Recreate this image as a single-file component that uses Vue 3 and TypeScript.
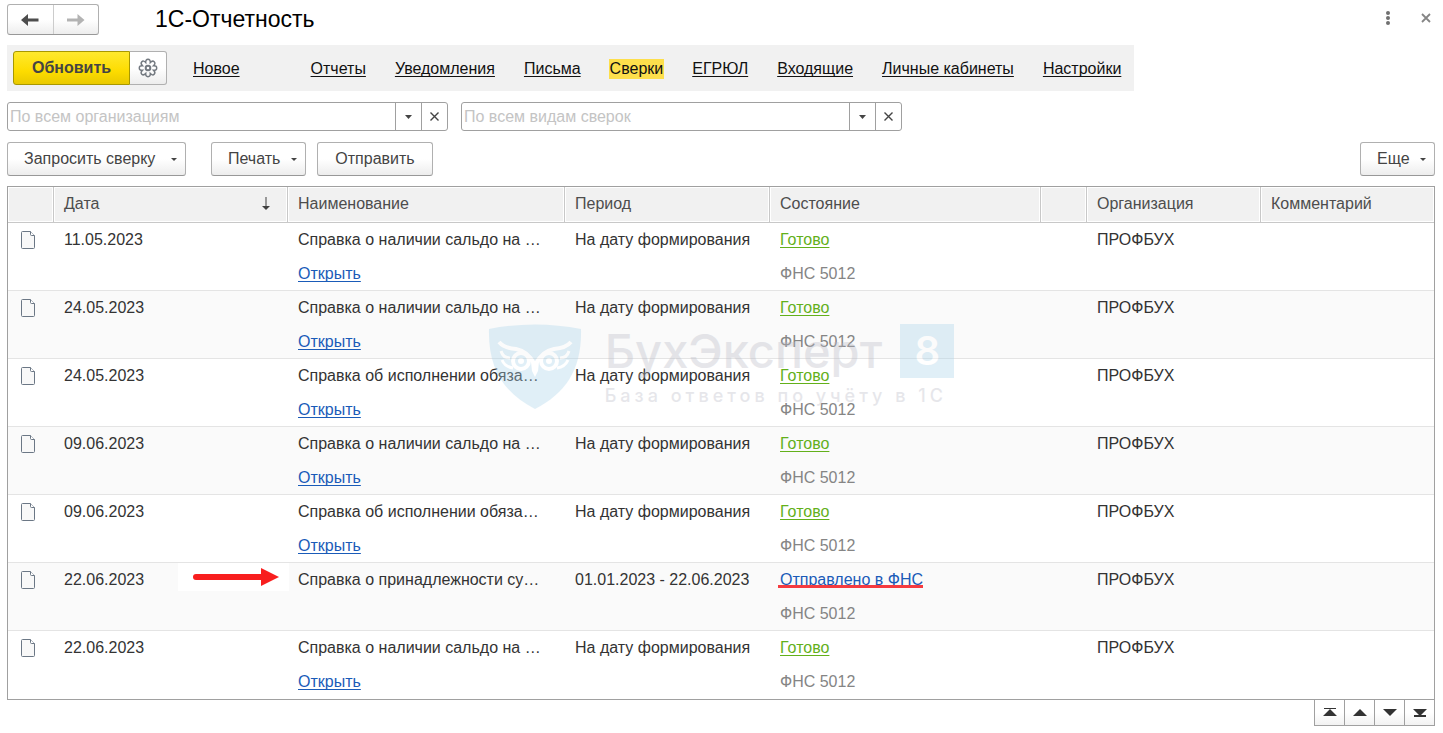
<script setup lang="ts">
interface Row {
  date: string
  name: string
  period: string
  state: string
  sent?: boolean
}

const sections: string[] = ['Отчеты', 'Уведомления', 'Письма', 'Сверки', 'ЕГРЮЛ', 'Входящие', 'Личные кабинеты', 'Настройки']
const active = 'Сверки'

const filters = [
  { id: 'org', label: 'По всем организациям' },
  { id: 'kind', label: 'По всем видам сверок' },
]

const today = 'На дату формирования'
const balance = 'Справка о наличии сальдо на …'
const duty = 'Справка об исполнении обяза…'

const rows: Row[] = [
  { date: '11.05.2023', name: balance, period: today, state: 'Готово' },
  { date: '24.05.2023', name: balance, period: today, state: 'Готово' },
  { date: '24.05.2023', name: duty, period: today, state: 'Готово' },
  { date: '09.06.2023', name: balance, period: today, state: 'Готово' },
  { date: '09.06.2023', name: duty, period: today, state: 'Готово' },
  { date: '22.06.2023', name: 'Справка о принадлежности су…', period: '01.01.2023 - 22.06.2023', state: 'Отправлено в ФНС', sent: true },
  { date: '22.06.2023', name: balance, period: today, state: 'Готово' },
]

const scrollers = [
  { label: 'В начало', d: 'M7 4h12v1h-12z M13 5l7 7h-14z' },
  { label: 'Вверх', d: 'M13 5l7 7h-14z' },
  { label: 'Вниз', d: 'M6 5h14l-7 7z' },
  { label: 'В конец', d: 'M6 5h14l-7 7z M7 11h12v2h-12z' },
]
</script>

<template>
  <main class="page">
    <header class="top">
      <div class="history">
        <button type="button" aria-label="Назад">
          <svg width="18" height="12" viewBox="0 0 18 12"><path d="M0 6l7-6v4.500h10.500v3h-10.500v4.500z" fill="#4d4d4d" /></svg>
        </button>
        <button type="button" aria-label="Вперед">
          <svg width="18" height="12" viewBox="0 0 18 12"><path d="M17.500 6l-7-6v4.500h-10.500v3h10.500v4.500z" fill="#b3b3b3" /></svg>
        </button>
      </div>
      <h1>1С-Отчетность</h1>
      <div class="window">
        <button type="button" aria-label="Меню">
          <svg width="6" height="16" viewBox="0 0 6 16" fill="#707070"><circle cx="3" cy="3" r="2" /><circle cx="3" cy="8" r="2" /><circle cx="3" cy="13" r="2" /></svg>
        </button>
        <button type="button" aria-label="Закрыть">
          <svg width="10" height="10" viewBox="0 0 10 10"><path d="M1 1l8 8M9 1l-8 8" stroke="#858585" stroke-width="1.800" /></svg>
        </button>
      </div>
    </header>

    <nav class="nav">
      <div class="refresh">
        <button type="button" class="primary">Обновить</button>
        <button type="button" class="gear" aria-label="Настройка обновления">
          <svg width="20" height="20" viewBox="0 0 20 20" fill="none" stroke="#737980" stroke-width="1.500">
            <path d="M7.700 4.500Q7.600 1.300 10 1.300T12.300 4.500Q14.500 2.200 16.200 3.800T15.500 7.700Q18.700 7.600 18.700 10T15.500 12.300Q17.800 14.500 16.200 16.200T12.300 15.500Q12.400 18.700 10 18.700T7.700 15.500Q5.500 17.800 3.800 16.200T4.500 12.300Q1.300 12.400 1.300 10T4.500 7.700Q2.200 5.500 3.800 3.800T7.700 4.500Z" />
            <circle cx="10" cy="10" r="2.300" stroke-width="2" />
          </svg>
        </button>
      </div>
      <a href="#" class="new">Новое</a>
      <a v-for="s in sections" :key="s" href="#" :class="{ active: s === active }">{{ s }}</a>
    </nav>

    <div class="filters">
      <div v-for="f in filters" :key="f.id" class="combo">
        <input :id="f.id" type="text" :placeholder="f.label" :aria-label="f.label" />
        <button type="button" aria-label="Выбрать">
          <svg width="7" height="4" viewBox="0 0 7 4"><path d="M0 0h7l-3.500 4z" fill="#444" /></svg>
        </button>
        <button type="button" aria-label="Очистить">
          <svg width="9" height="9" viewBox="0 0 9 9"><path d="M0.500 0.500l8 8M8.500 0.500l-8 8" stroke="#444" stroke-width="1.400" /></svg>
        </button>
      </div>
    </div>

    <div class="actions">
      <button type="button" class="btn drop request">Запросить сверку<i /></button>
      <button type="button" class="btn drop print">Печать<i /></button>
      <button type="button" class="btn send">Отправить</button>
      <button type="button" class="btn drop more">Еще<i /></button>
    </div>

    <div class="list">
      <table>
        <colgroup>
          <col class="c-icon" /><col class="c-date" /><col class="c-name" /><col class="c-period" />
          <col class="c-state" /><col class="c-icon" /><col class="c-org" /><col />
        </colgroup>
        <thead>
          <tr>
            <th />
            <th>
              <div class="sort">
                Дата
                <svg width="8" height="14" viewBox="0 0 8 14"><path d="M3.500 0h1v9h3.500l-4 4-4-4h3.500z" fill="#404040" /></svg>
              </div>
            </th>
            <th>Наименование</th>
            <th>Период</th>
            <th>Состояние</th>
            <th />
            <th>Организация</th>
            <th>Комментарий</th>
          </tr>
        </thead>
        <tbody>
          <tr v-for="(r, i) in rows" :key="i">
            <td class="doc">
              <svg width="16" height="20" viewBox="0 0 16 20">
                <path d="M1.500 2.500q0-1 1-1h8l4 4v12q0 1-1 1h-11q-1 0-1-1z" fill="#f8f8f8" stroke="#6b7785" />
                <path d="M10.500 1.500v3q0 1 1 1h3" fill="#fff" stroke="#6b7785" />
              </svg>
            </td>
            <td class="date">
              {{ r.date }}
              <svg v-if="r.sent" class="arrow" width="111" height="28" viewBox="0 0 111 28">
                <path d="M18 14h66" stroke="#f81e1e" stroke-width="6" stroke-linecap="round" />
                <path d="M83 5l18 9-18 9z" fill="#f81e1e" />
              </svg>
            </td>
            <td>
              <div>{{ r.name }}</div>
              <a v-if="!r.sent" href="#" class="blue">Открыть</a>
            </td>
            <td>{{ r.period }}</td>
            <td>
              <div><a href="#" :class="r.sent ? 'blue marked' : 'green'">{{ r.state }}</a></div>
              <div class="fns">ФНС 5012</div>
            </td>
            <td />
            <td>ПРОФБУХ</td>
            <td />
          </tr>
        </tbody>
      </table>

      <div class="watermark">
        <svg width="94" height="86" viewBox="0 0 94 86">
          <path d="M1 5Q47-4 93 5C94 45 78 69 47 85C16 69 0 45 1 5Z" fill="#a9d3ea" />
          <g fill="none" stroke="#fff" stroke-width="4">
            <circle cx="33" cy="37" r="8" />
            <circle cx="61" cy="37" r="8" />
            <path d="M11 18Q16 24 28 25Q40 27 47 41Q54 27 66 25Q78 24 83 18" />
            <path d="M13 27Q15 34 22 34M14 36Q17 43 25 44M81 27Q79 34 72 34M80 36Q77 43 69 44" stroke-width="3" />
          </g>
          <path d="M43 38h8l-1 9-3 6-3-6z" fill="#fff" />
          <circle cx="33" cy="37" r="3" fill="#fff" /><circle cx="61" cy="37" r="3" fill="#fff" />
        </svg>
        <div class="brand">
          <div class="brand-row"><span class="word">БухЭксперт</span><span class="eight">8</span></div>
          <div class="slogan">База ответов по учёту в 1С</div>
        </div>
      </div>
    </div>

    <div class="scrollers">
      <button v-for="s in scrollers" :key="s.label" type="button" :aria-label="s.label">
        <svg width="26" height="18" viewBox="0 0 26 18"><path :d="s.d" fill="#333" /></svg>
      </button>
    </div>
  </main>
</template>

<style>
body {
  background: #fff;
}
</style>

<style scoped>
.page {
  padding: 4px 8px 0 7px;
  font: 16px/20px "Liberation Sans", Arial, sans-serif;
  color: #333;
}
.page *,
.page {
  box-sizing: border-box;
}
button,
input {
  margin: 0;
  padding: 0;
  font: inherit;
  color: #444;
}
a {
  color: #111;
  text-decoration: underline 1px;
  text-underline-offset: 2px;
  text-decoration-skip-ink: none;
}
svg {
  display: block;
}
.top {
  display: flex;
  height: 31px;
}
.history {
  display: flex;
  width: 92px;
  border: 1px solid #b0b0b0;
  border-bottom-color: #989898;
  border-radius: 3px;
  background: linear-gradient(#fff 50%, #ededed);
}
.history button {
  flex: 1;
  display: flex;
  align-items: center;
  justify-content: center;
  border: 0;
  background: none;
}
.history button + button {
  border-left: 1px solid #ccc;
}
h1 {
  margin: 0 0 0 56px;
  font-size: 23px;
  line-height: 30px;
  font-weight: 400;
  color: #000;
}
.window {
  display: flex;
  align-items: center;
  gap: 30px;
  margin: 0 4px 4px auto;
}
.window button {
  border: 0;
  background: none;
}
.nav {
  display: flex;
  align-items: center;
  gap: 29px;
  width: fit-content;
  height: 46px;
  margin-top: 10px;
  padding: 0 13px 0 6px;
  background: #f1f1f1;
}
.nav a {
  margin-top: 2px;
}
.refresh {
  display: flex;
  height: 34px;
}
.primary {
  width: 117px;
  border: 1px solid #a89800;
  border-radius: 3px 0 0 3px;
  background: linear-gradient(#ffe92e, #fddc00 60%, #e9c900);
  font-weight: 700;
}
.gear {
  display: flex;
  align-items: center;
  justify-content: center;
  width: 37px;
  padding-right: 1px;
  border: 1px solid #b0b0b0;
  border-left: 0;
  border-radius: 0 3px 3px 0;
  background: linear-gradient(#fff 50%, #ededed);
}
.new {
  margin-left: -3px;
  margin-right: 42px;
}
.active {
  margin: 0 -1px;
  padding: 0 1px;
  background: #fddf4c;
  text-decoration: none;
}
.filters {
  display: flex;
  gap: 13px;
  margin-top: 11px;
}
.combo {
  display: flex;
  width: 441px;
  height: 29px;
  border: 1px solid #a0a0a0;
  border-radius: 3px;
}
.combo input {
  flex: 1;
  min-width: 0;
  padding-left: 2px;
  border: 0;
  background: none;
}
.combo input::placeholder {
  color: #c4c4c4;
}
.combo button {
  display: flex;
  align-items: center;
  justify-content: center;
  width: 26px;
  padding-right: 1px;
  border: 0;
  border-left: 1px solid #a0a0a0;
  background: none;
}
.actions {
  display: flex;
  gap: 11px;
  margin-top: 11px;
}
.btn {
  display: flex;
  align-items: center;
  justify-content: center;
  height: 34px;
  padding: 0 16px;
  border: 1px solid #b0b0b0;
  border-bottom-color: #989898;
  border-radius: 3px;
  background: linear-gradient(#fff 50%, #ededed);
}
.drop {
  justify-content: space-between;
  padding-right: 8px;
}
.drop i {
  border: 3px solid transparent;
  border-top-color: #444;
  border-bottom: 0;
}
.request {
  min-width: 179px;
  margin-right: 14px;
}
.print {
  min-width: 95px;
}
.send {
  min-width: 116px;
}
.more {
  min-width: 75px;
  margin-left: auto;
}
.list {
  position: relative;
  margin-top: 10px;
  border: 1px solid #a0a0a0;
}
table {
  width: 100%;
  table-layout: fixed;
  border-collapse: separate;
  border-spacing: 0;
}
.c-icon {
  width: 46px;
}
.c-date {
  width: 234px;
}
.c-name {
  width: 277px;
}
.c-period {
  width: 205px;
}
.c-state {
  width: 271px;
}
.c-org {
  width: 174px;
}
th {
  height: 36px;
  padding: 0 10px 2px;
  border-right: 1px solid #c8c8c8;
  border-bottom: 1px solid #c8c8c8;
  background: #f1f1f1;
  box-shadow: inset 0 0 0 1px #fff;
  font-weight: 400;
  text-align: left;
  color: #4d4d4d;
}
th:last-child {
  border-right: 0;
}
.sort {
  display: flex;
  align-items: center;
  justify-content: space-between;
  padding-right: 7px;
}
td {
  height: 68px;
  padding: 0 10px;
  box-shadow: inset 0 -1px #e4e4e4;
  vertical-align: top;
  line-height: 34px;
  white-space: nowrap;
}
tr:nth-child(even) td {
  background: #fafafa;
}
tr:last-child td {
  box-shadow: none;
}
.doc {
  padding: 7px 12px;
}
.date {
  position: relative;
}
.arrow {
  position: absolute;
  top: 0;
  right: -1px;
  background: #fff;
}
.blue {
  color: #1a5bb8;
}
.green {
  color: #63b01a;
}
.fns {
  color: #858585;
}
.marked {
  position: relative;
}
.marked::after {
  content: "";
  position: absolute;
  left: -2px;
  right: 0;
  bottom: 0;
  height: 3px;
  background: #f53b40;
}
.watermark {
  position: absolute;
  top: 137px;
  left: 0;
  right: 0;
  display: flex;
  justify-content: center;
  gap: 23px;
  opacity: 0.35;
  pointer-events: none;
  color: #b9bac6;
  font-family: Inter, "Liberation Sans", sans-serif;
}
.brand-row {
  display: flex;
  justify-content: space-between;
  gap: 18px;
}
.word {
  font-size: 47px;
  line-height: 54px;
  font-weight: 500;
}
.eight {
  width: 54px;
  background: #a9d3ea;
  color: #fff;
  font-size: 40px;
  line-height: 54px;
  font-weight: 600;
  text-align: center;
}
.slogan {
  font-size: 18px;
  line-height: 36px;
  font-weight: 500;
  letter-spacing: 4px;
}
.scrollers {
  display: flex;
  justify-content: flex-end;
}
.scrollers button {
  width: 30px;
  height: 26px;
  border: 1px solid #a0a0a0;
  border-width: 0 1px 1px 0;
  background: linear-gradient(#fff 50%, #f2f2f2);
  display: flex;
  align-items: center;
  justify-content: center;
}
.scrollers button:first-child {
  width: 31px;
  border-left-width: 1px;
}
</style>
